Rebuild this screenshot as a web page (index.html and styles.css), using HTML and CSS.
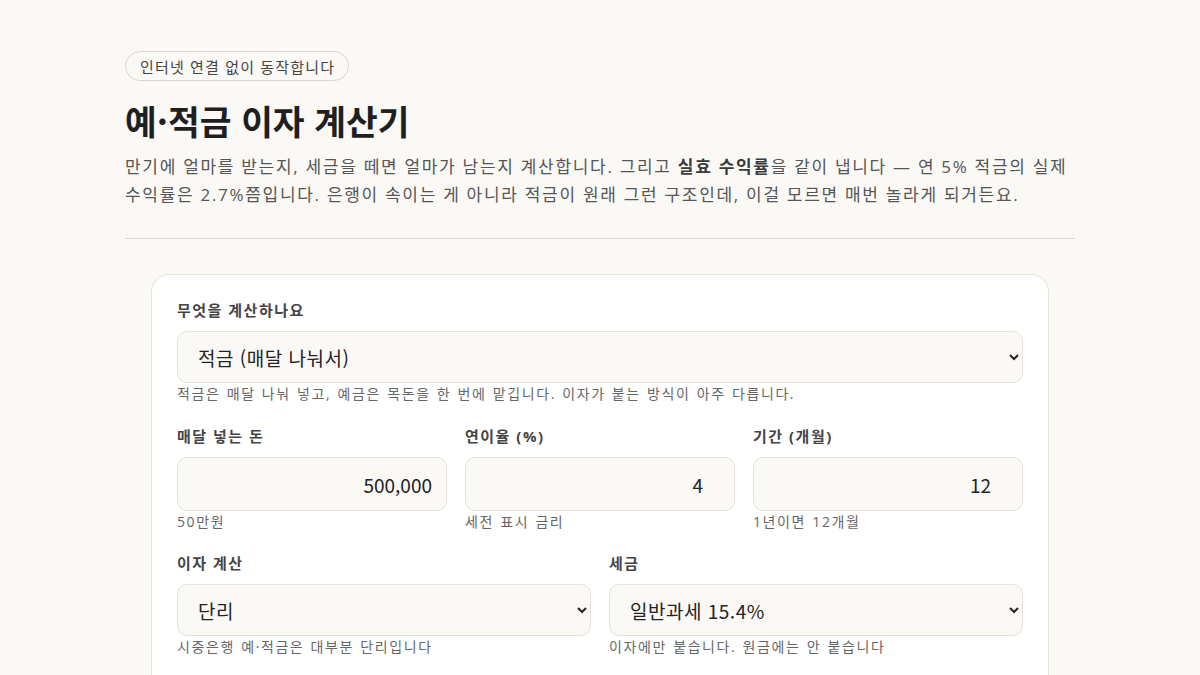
FILE: index.html
```html
<!DOCTYPE html>
<html lang="ko">
<head>
<meta charset="utf-8">
<title>예·적금 이자 계산기</title>
<link rel="stylesheet" href="styles.css">
</head>
<body>
<main class="page">
  <header class="intro">
    <span class="badge">인터넷 연결 없이 동작합니다</span>
    <h1 class="title">예·적금 이자 계산기</h1>
    <p class="lead">만기에 얼마를 받는지, 세금을 떼면 얼마가 남는지 계산합니다. 그리고 <strong>실효 수익률</strong>을 같이 냅니다 — 연 5% 적금의 실제 수익률은 2.7%쯤입니다. 은행이 속이는 게 아니라 적금이 원래 그런 구조인데, 이걸 모르면 매번 놀라게 되거든요.</p>
  </header>
  <hr class="divider">
  <section class="card">
    <div class="field">
      <label class="label" for="kind">무엇을 계산하나요</label>
      <select id="kind" class="control select">
        <option>적금 (매달 나눠서)</option>
        <option>예금 (한 번에)</option>
      </select>
      <span class="hint">적금은 매달 나눠 넣고, 예금은 목돈을 한 번에 맡깁니다. 이자가 붙는 방식이 아주 다릅니다.</span>
    </div>
    <div class="row three">
      <div class="field">
        <label class="label" for="amount">매달 넣는 돈</label>
        <input id="amount" class="control input" type="text" value="500,000">
        <span class="hint">50만원</span>
      </div>
      <div class="field">
        <label class="label" for="rate">연이율 (%)</label>
        <input id="rate" class="control input number" type="number" value="4">
        <span class="hint">세전 표시 금리</span>
      </div>
      <div class="field">
        <label class="label" for="months">기간 (개월)</label>
        <input id="months" class="control input number" type="number" value="12">
        <span class="hint">1년이면 12개월</span>
      </div>
    </div>
    <div class="row two">
      <div class="field">
        <label class="label" for="method">이자 계산</label>
        <select id="method" class="control select">
          <option>단리</option>
          <option>월복리</option>
        </select>
        <span class="hint">시중은행 예·적금은 대부분 단리입니다</span>
      </div>
      <div class="field">
        <label class="label" for="tax">세금</label>
        <select id="tax" class="control select">
          <option>일반과세 15.4%</option>
          <option>비과세 0%</option>
        </select>
        <span class="hint">이자에만 붙습니다. 원금에는 안 붙습니다</span>
      </div>
    </div>
  </section>
</main>
</body>
</html>
```

FILE: styles.css
```css
html, body {
  margin: 0;
  padding: 0;
}
body {
  background: #faf9f6;
  color: #222;
  font-family: "Open Sans", "Noto Sans CJK KR", sans-serif;
}
.page {
  width: 950px;
  margin: 0 auto;
  padding-top: 51px;
}
.intro {
  display: flex;
  flex-direction: column;
  align-items: flex-start;
}
.badge {
  display: inline-flex;
  align-items: center;
  height: 28px;
  padding: 0 13px 0 14px;
  border: 1px solid #d9d5cc;
  border-radius: 999px;
  font-size: 15px;
  letter-spacing: 1.2px;
  color: #444;
  background: #faf9f6;
}
.title {
  margin: 14px 0 0;
  font-size: 34.5px;
  line-height: 50px;
  font-weight: 700;
  color: #1f1f1f;
  font-family: "Noto Sans CJK KR", sans-serif;
}
.lead {
  margin: 8px -10px 0 0;
  font-size: 17px;
  line-height: 28px;
  letter-spacing: 1.7px;
  color: #555;
}
.lead strong {
  color: #3a3a3a;
  font-weight: 700;
}
.divider {
  margin: 29px 0 35px;
  border: 0;
  border-top: 1px solid #dcd8cf;
}
.card {
  margin: 0 26px;
  background: #fff;
  border: 1px solid #e6e2d9;
  border-radius: 18px;
  padding: 24px 25px 40px;
  display: flex;
  flex-direction: column;
}
.row {
  display: grid;
  gap: 18px;
}
.row.three {
  grid-template-columns: repeat(3, 1fr);
  margin-top: 21px;
}
.row.two {
  grid-template-columns: repeat(2, 1fr);
  margin-top: 20px;
}
.field {
  display: flex;
  flex-direction: column;
  min-width: 0;
}
.label {
  font-size: 15px;
  line-height: 22px;
  font-weight: 700;
  letter-spacing: 1.5px;
  color: #444;
  margin-bottom: 10px;
}
.control {
  box-sizing: border-box;
  width: 100%;
  border: 1px solid #e5e1d8;
  border-radius: 10px;
  background: #faf9f6;
  color: #222;
  font-family: "Noto Sans CJK KR", sans-serif;
  font-size: 19px;
}
.select {
  height: 52px;
  padding: 0 14px 0 16px;
  letter-spacing: 0.5px;
}
.input {
  height: 54px;
  padding: 0 14px;
  text-align: right;
}
.input.number {
  padding-right: 16px;
}
.hint {
  margin-top: 1px;
  font-size: 14px;
  line-height: 20px;
  letter-spacing: 1.6px;
  word-spacing: 1px;
  color: #666;
}
```
